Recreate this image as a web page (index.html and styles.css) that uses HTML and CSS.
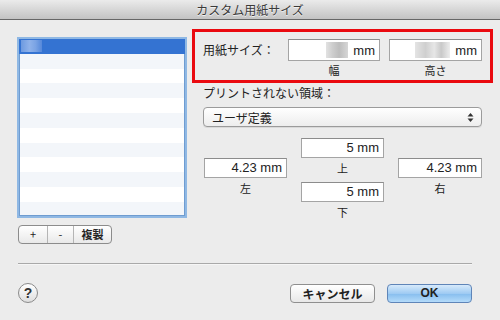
FILE: index.html
```html
<!DOCTYPE html>
<html lang="ja">
<head>
  <meta charset="UTF-8">
  <title>カスタム用紙サイズ</title>
  <link rel="stylesheet" href="styles.css">
</head>
<body>
  <div class="titlebar">カスタム用紙サイズ</div>

  <div class="main">
    <!-- Lista de tamaños -->
    <div class="left">
      <div class="list">
        <div class="row-selected"><span class="blur-name"></span></div>
      </div>
      <div class="btn-group">
        <span class="seg seg-plus">+</span>
        <span class="seg seg-minus">-</span>
        <span class="seg seg-dup">複製</span>
      </div>
    </div>

    <!-- Ajustes -->
    <div class="right">
      <div class="redbox">
        <div class="size-label">用紙サイズ：</div>
        <div class="size-col col-w">
          <div class="field"><span class="blur blur-w"></span>mm</div>
          <div class="sub-label">幅</div>
        </div>
        <div class="size-col col-h">
          <div class="field"><span class="blur blur-h"></span>mm</div>
          <div class="sub-label">高さ</div>
        </div>
      </div>

      <div class="area-label">プリントされない領域：</div>
      <div class="popup">
        <span>ユーザ定義</span>
        <span class="arrows">
          <svg width="7" height="11" viewBox="0 0 7 11">
            <path d="M0.5 4.5 L3.5 1 L6.5 4.5 Z" fill="#333"/>
            <path d="M0.5 6.5 L3.5 10 L6.5 6.5 Z" fill="#333"/>
          </svg>
        </span>
      </div>

      <div class="margins">
        <div class="m-col m-side">
          <div class="mfield">4.23 mm</div>
          <div class="m-label">左</div>
        </div>
        <div class="m-col">
          <div class="mfield">5 mm</div>
          <div class="m-label m-label-mid">上</div>
          <div class="mfield">5 mm</div>
          <div class="m-label">下</div>
        </div>
        <div class="m-col m-side">
          <div class="mfield">4.23 mm</div>
          <div class="m-label">右</div>
        </div>
      </div>
    </div>
  </div>

  <div class="separator"></div>

  <div class="footer">
    <div class="help">?</div>
    <div class="spacer"></div>
    <div class="button">キャンセル</div>
    <div class="button button-ok">OK</div>
  </div>
</body>
</html>
```

FILE: styles.css
```css
body {
  margin: 0;
  width: 500px;
  height: 320px;
  overflow: hidden;
  background-color: #ececec;
  font-family: "Noto Sans CJK JP", "Liberation Sans", sans-serif;
  font-size: 12px;
  color: #222;
}
.titlebar {
  height: 19px;
  line-height: 19px;
  border-bottom: 1px solid #676767;
  background: linear-gradient(#ebebeb, #c3c3c3);
  text-align: center;
  font-size: 12px;
  color: #3a3a3a;
  text-shadow: 0 1px 0 #f2f2f2;
}
.main {
  display: flex;
  padding: 0 0 0 17px;
}
/* Lista */
.left {
  width: 170px;
  margin-top: 17px;
}
.list {
  height: 181px;
  box-sizing: border-box;
  border: 2px solid #8fb8e4;
  box-shadow: inset 0 0 0 1px #6f9cd0;
  background: repeating-linear-gradient(#ffffff 0, #ffffff 14.8px, #f3f6fa 14.8px, #f3f6fa 29.6px);
  padding: 0;
}
.row-selected {
  height: 14.8px;
  background-color: #3473d2;
  position: relative;
}
.blur-name {
  position: absolute;
  left: 2px;
  top: 1px;
  width: 21px;
  height: 12px;
  background: linear-gradient(90deg, #6d9ae0, #8fb2ea 40%, #7aa3e4 70%, #5588da);
}
.btn-group {
  display: flex;
  margin-top: 7px;
  margin-left: 1px;
  width: 94px;
  height: 19px;
  box-sizing: border-box;
  border: 1px solid #8c8c8c;
  border-radius: 4px;
  background: linear-gradient(#ffffff, #e9e9e9);
}
.seg {
  text-align: center;
  line-height: 17px;
  font-size: 11px;
  color: #222;
}
.seg-plus {
  width: 28px;
  border-right: 1px solid #b5b5b5;
}
.seg-minus {
  width: 25px;
  border-right: 1px solid #b5b5b5;
}
.seg-dup {
  flex-grow: 1;
  font-weight: bold;
}
/* Ajustes */
.right {
  margin-left: 5px;
  margin-top: 9px;
}
.redbox {
  display: flex;
  width: 301px;
  height: 54px;
  box-sizing: border-box;
  border: 3px solid #ea0a10;
  padding: 7px 0 0 8px;
}
.size-label {
  width: 85px;
  line-height: 22px;
  font-size: 12px;
}
.size-col {
  display: flex;
  flex-direction: column;
}
.col-w {
  width: 92px;
  margin-right: 9px;
}
.col-h {
  width: 93px;
}
.field {
  height: 22px;
  box-sizing: border-box;
  border: 1px solid #a4a4a4;
  border-top-color: #8c8c8c;
  background-color: #fff;
  display: flex;
  align-items: center;
  justify-content: flex-end;
  padding-right: 4px;
  font-family: "Liberation Sans", sans-serif;
  font-size: 13px;
}
.blur {
  height: 16px;
  margin-right: 5px;
}
.blur-w {
  width: 22px;
  background: linear-gradient(90deg, #e2e2e2, #cdcdcd 30%, #bdbdbd 60%, #d6d6d6);
}
.blur-h {
  width: 35px;
  background: linear-gradient(90deg, #e4e4e4, #cfcfcf 30%, #e6e6e6 55%, #c9c9c9 75%, #ededed);
}
.sub-label {
  height: 18px;
  line-height: 18px;
  text-align: center;
  font-size: 11px;
}
.area-label {
  margin-top: 2px;
  padding-left: 11px;
  line-height: 16px;
  font-size: 12px;
}
.popup {
  display: flex;
  align-items: center;
  justify-content: space-between;
  margin: 6px 0 0 11px;
  width: 279px;
  height: 20px;
  box-sizing: border-box;
  border: 1px solid #9b9b9b;
  border-radius: 4px;
  background: linear-gradient(#ffffff, #ededed);
  padding: 0 7px 0 8px;
  font-size: 12px;
  box-shadow: 0 1px 0 rgba(0, 0, 0, 0.08);
}
.arrows {
  display: flex;
}
.margins {
  display: flex;
  gap: 14px;
  margin: 11px 0 0 12px;
}
.m-col {
  display: flex;
  flex-direction: column;
  width: 83px;
}
.m-side {
  padding-top: 20px;
}
.m-side:last-child {
  width: 84px;
}
.mfield {
  height: 20px;
  box-sizing: border-box;
  border: 1px solid #a4a4a4;
  border-top-color: #8c8c8c;
  background-color: #fff;
  text-align: right;
  padding-right: 4px;
  line-height: 18px;
  font-family: "Liberation Sans", sans-serif;
  font-size: 13px;
}
.m-label {
  height: 20px;
  line-height: 20px;
  text-align: center;
  font-size: 11px;
}
.m-label-mid {
  height: 24px;
}
/* Pie */
.separator {
  margin: 19px 28px 0 18px;
  height: 1px;
  background-color: #a9a9a9;
  border-bottom: 1px solid #f6f6f6;
}
.footer {
  display: flex;
  align-items: center;
  margin-top: 18px;
  padding: 0 28px 0 18px;
}
.help {
  width: 20px;
  height: 20px;
  box-sizing: border-box;
  border: 1px solid #8a8a8a;
  border-radius: 50%;
  background: linear-gradient(#ffffff, #dedede);
  text-align: center;
  line-height: 18px;
  font-family: "Liberation Sans", sans-serif;
  font-weight: bold;
  font-size: 14px;
  color: #333;
}
.spacer {
  flex-grow: 1;
}
.button {
  width: 85px;
  height: 19px;
  box-sizing: border-box;
  border: 1px solid #8f8f8f;
  border-radius: 4px;
  background: linear-gradient(#ffffff, #e8e8e8);
  text-align: center;
  line-height: 17px;
  font-size: 12px;
  font-weight: bold;
  color: #222;
}
.button-ok {
  margin-left: 12px;
  border-color: #5f85b8;
  background: linear-gradient(#d7eafb, #9fcbf3 50%, #86bdee 51%, #b4dbfa);
  font-family: "Liberation Sans", sans-serif;
}
```
